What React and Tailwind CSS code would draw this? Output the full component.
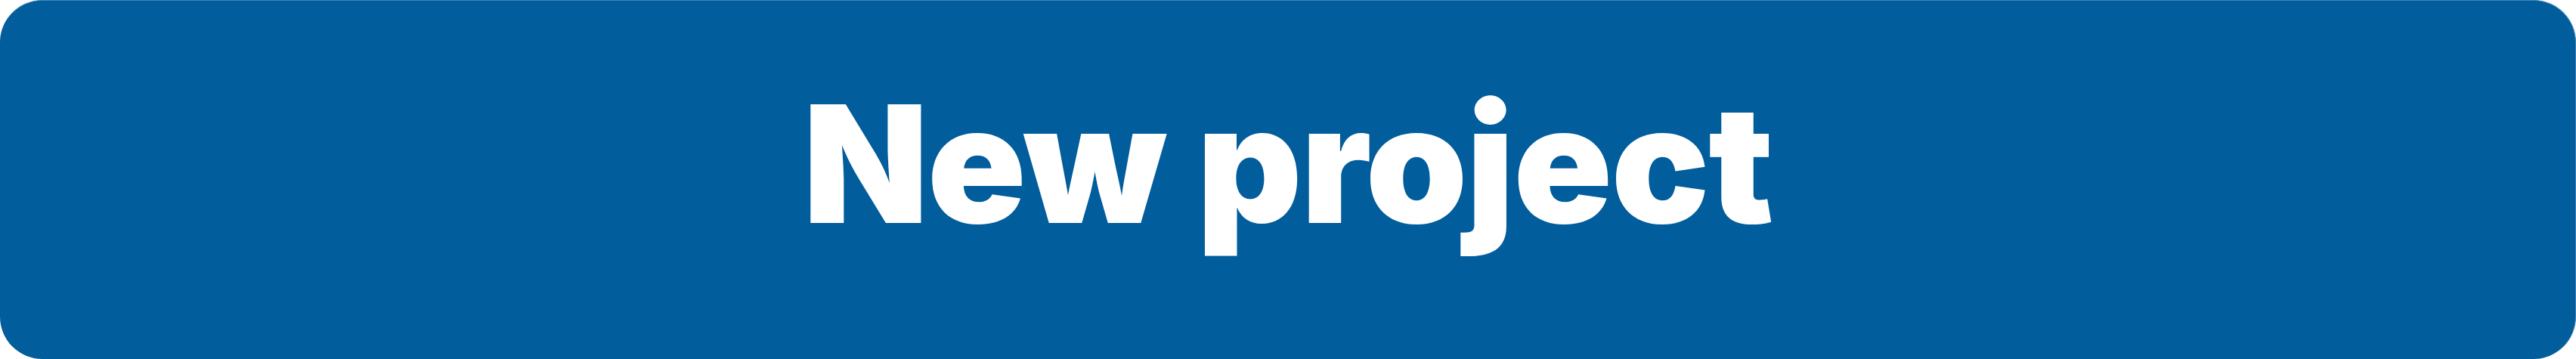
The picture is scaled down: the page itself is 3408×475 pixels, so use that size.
export default function App() {
  return (
    <div className="w-[3408px] h-[475px]">
      <button
        type="button"
        className="w-full h-full rounded-[56px] bg-[#015d9c] border-t border-r border-[#4186b5] text-white flex items-center justify-center pb-[43px] font-['Inter',sans-serif] font-black text-[216px] leading-none tracking-[-1.6px]"
      >
        New project
      </button>
    </div>
  );
}
